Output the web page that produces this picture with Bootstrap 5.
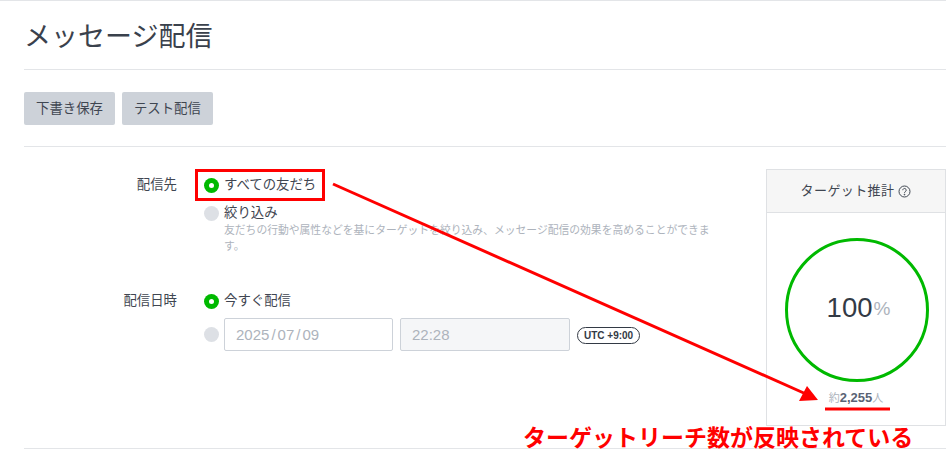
<!DOCTYPE html>
<html lang="ja">
<head>
<meta charset="utf-8">
<title>メッセージ配信</title>
<link href="https://cdn.jsdelivr.net/npm/bootstrap@5.3.0/dist/css/bootstrap.min.css" rel="stylesheet">
<style>
html,body{margin:0;height:462px;overflow:hidden;background:#fff}
body{font-family:"Liberation Sans","Noto Sans CJK JP",sans-serif;color:#3f4651;font-size:13.4px}
.page{position:relative;width:946px;height:462px;border-top:1px solid #e3e5e8;padding-left:24px}
.title-row{height:69px;border-bottom:1px solid #e3e5e8;display:flex;align-items:center;padding-top:5px}
.title-row h1{font-size:27px;font-weight:400;margin:0;color:#3a414c;line-height:1}
.tool-row{height:77px;border-bottom:1px solid #e3e5e8;padding-top:22px;gap:7px}
.btn-soft{background:#cdd2d9;border:0;border-radius:2px;color:#3f4651;font-size:13.4px;height:33px;padding:0 12px;line-height:33px}
.body-row{height:302px;border-bottom:1px solid #e3e5e8;padding-top:22px}
.form-col{width:742px;flex:none}
.lbl{width:153px;flex:none;text-align:right;line-height:20px;color:#3f4651}
.opts{margin-left:27px;width:514px}
.dot{width:15px;height:15px;border-radius:50%;flex:none;background:#dde0e5;margin-right:5px}
.dot.on{background:#00b900;position:relative}
.dot.on::after{content:"";position:absolute;left:5px;top:5px;width:5px;height:5px;background:#fff;border-radius:50%}
.opt{display:flex;align-items:center;height:20px;font-size:13.4px;color:#3f4651}
.hint{margin-left:20px;font-size:10.8px;line-height:16px;color:#adb3bc;width:490px;margin-top:-1px}
.dt{height:33px;border:1px solid #cdd2d9;border-radius:2px;font-size:15px;color:#adb3bc;padding:0 11px;line-height:31px;background:#fff;width:169px}
.dt.off{background:#f5f6f8;width:170px;margin-left:7px}
.slash{margin:0 2px}
.utc{margin-left:7px;border:1px solid #333a45;border-radius:9px;font-size:10px;font-weight:700;height:17px;line-height:15px;padding:0 6px;color:#333a45;white-space:nowrap;margin-top:9px}
.est{width:180px;height:257px;border:1px solid #dfe1e4;flex:none}
.est-head{height:43px;background:#f6f6f6;border-bottom:1px solid #dfe1e4;font-size:13px;display:flex;align-items:center;justify-content:center;gap:4px;letter-spacing:.4px}
.ring{width:144px;height:144px;border:3px solid #00b900;border-radius:50%;margin:25px 0 0 18px;display:flex;align-items:center;justify-content:center;font-size:27.5px;color:#333a45;padding:0 0 4px 3px}
.ring span{font-size:19px;color:#adb3bc;margin:2px 0 0 1px}
.reach{text-align:center;font-size:11px;color:#adb3bc;margin-top:8px;line-height:16px}
.reach b{font-size:13px;color:#5a6375;font-weight:700}
.note{position:absolute;left:523px;top:423px;font-size:23px;font-weight:700;color:#f00;line-height:28px;white-space:nowrap}
.overlay{position:absolute;left:0;top:-1px;pointer-events:none}
</style>
</head>
<body>
<div class="page">
  <div class="title-row"><h1>メッセージ配信</h1></div>
  <div class="tool-row d-flex align-items-start">
    <button class="btn btn-soft">下書き保存</button>
    <button class="btn btn-soft">テスト配信</button>
  </div>
  <div class="body-row d-flex">
    <div class="form-col">
      <div class="d-flex" style="height:122px">
        <div class="lbl" style="margin-top:6px">配信先</div>
        <div class="opts" style="padding-top:6px">
          <div class="opt"><i class="dot on"></i>すべての友だち</div>
          <div class="opt" style="margin-top:8px"><i class="dot"></i>絞り込み</div>
          <div class="hint">友だちの行動や属性などを基にターゲットを絞り込み、メッセージ配信の効果を高めることができます。</div>
        </div>
      </div>
      <div class="d-flex">
        <div class="lbl">配信日時</div>
        <div class="opts">
          <div class="opt"><i class="dot on"></i>今すぐ配信</div>
          <div class="d-flex align-items-start" style="margin-top:7px">
            <i class="dot" style="margin-top:9px"></i>
            <div class="dt">2025<span class="slash">/</span>07<span class="slash">/</span>09</div>
            <div class="dt off">22:28</div>
            <div class="utc">UTC +9:00</div>
          </div>
        </div>
      </div>
    </div>
    <div class="est">
      <div class="est-head">ターゲット推計
        <svg width="13" height="13" viewBox="0 0 13 13" fill="none" stroke="#3f4651"><circle cx="6.5" cy="6.5" r="5.5"/><path d="M4.8 5.2a1.7 1.7 0 1 1 2.6 1.4c-.6.4-.9.7-.9 1.3"/><circle cx="6.5" cy="9.6" r=".4" fill="#3f4651"/></svg>
      </div>
      <div class="ring">100<span>%</span></div>
      <div class="reach">約<b>2,255</b>人</div>
    </div>
  </div>
  <div class="note">ターゲットリーチ数が反映されている</div>
  <svg class="overlay" width="946" height="462" viewBox="0 0 946 462">
    <rect x="196.5" y="170.5" width="127" height="29" fill="none" stroke="#f00" stroke-width="3"/>
    <line x1="333" y1="184" x2="806" y2="394" stroke="#f00" stroke-width="3"/>
    <polygon points="818,400 807,386 799,401" fill="#f00"/>
    <line x1="825" y1="409" x2="890" y2="409" stroke="#f00" stroke-width="3"/>
  </svg>
</div>
<script src="https://cdn.jsdelivr.net/npm/bootstrap@5.3.0/dist/js/bootstrap.bundle.min.js"></script>
</body>
</html>
